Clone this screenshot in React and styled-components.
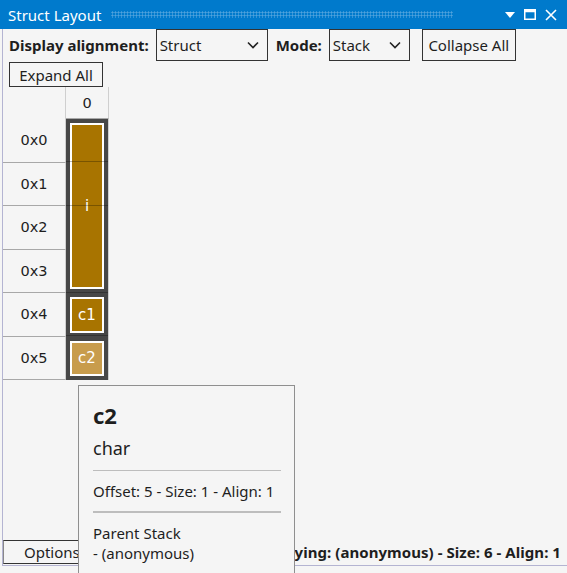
import React from 'react';
import styled, { createGlobalStyle } from 'styled-components';

const GlobalStyle = createGlobalStyle`
  html, body {
    margin: 0;
    padding: 0;
    background: #f5f5f5;
  }
  body {
    font-family: "Noto Sans", "Open Sans", sans-serif;
    color: #1e1e1e;
  }
`;

const ROW_H = 43.5;

const Window = styled.div`
  position: relative;
  height: 573px;
  display: flex;
  flex-direction: column;
  overflow: hidden;
`;

const TitleBar = styled.div`
  height: 29px;
  background: #007acc;
  display: flex;
  align-items: center;
  padding: 0 10px 0 8px;
  gap: 8px;
  color: #fff;
  font-size: 15px;
  flex-shrink: 0;
`;

const Grip = styled.div`
  flex: 1;
  height: 7px;
  margin: 0 44px 0 2px;
  background-image: radial-gradient(circle, #4fa2dc 0.9px, transparent 1.2px);
  background-size: 3px 3px;
`;

const TitleButtons = styled.div`
  display: flex;
  align-items: center;
  gap: 9px;
`;

const Body = styled.div`
  flex: 1;
  display: flex;
  flex-direction: column;
  margin-left: 2px;
  border-left: 1px solid #b4b4d2;
  border-bottom: 1px solid #b4b4d2;
  margin-bottom: 7px;
`;

const Toolbar = styled.div`
  display: flex;
  flex-wrap: wrap;
  align-items: center;
  padding: 0 0 0 6px;
  row-gap: 1px;
`;

const Label = styled.span`
  font-weight: 700;
  font-size: 15px;
  margin-right: ${p => p.$gap}px;
`;

const Select = styled.div`
  box-sizing: border-box;
  height: 32px;
  width: ${p => p.$w}px;
  border: 1px solid #333;
  display: flex;
  align-items: center;
  justify-content: space-between;
  padding: 0 8px 0 3px;
  font-size: 15px;
  margin-right: ${p => p.$gap}px;
`;

const Button = styled.div`
  box-sizing: border-box;
  height: ${p => p.$h}px;
  width: ${p => p.$w}px;
  border: 1px solid #333;
  display: flex;
  align-items: center;
  justify-content: center;
  font-size: 15px;
  background: #f5f5f5;
`;

const Grid = styled.div`
  display: grid;
  grid-template-columns: 63px 43px;
  grid-template-rows: 32px repeat(6, ${ROW_H}px);
  width: 106px;
  font-family: "DejaVu Sans", sans-serif;
  font-size: 14.5px;
`;

const HeadCell = styled.div`
  display: flex;
  align-items: center;
  justify-content: center;
  border-right: 1px solid #cfcfcf;
  border-bottom: ${p => (p.$blank ? 'none' : '1px solid #a8a8a8')};
`;

const RowCell = styled.div`
  display: flex;
  align-items: center;
  justify-content: center;
  border-right: 1px solid #cfcfcf;
  border-bottom: 1px solid #a8a8a8;
  grid-column: 1;
`;

const Block = styled.div`
  position: relative;
  grid-column: 2;
  grid-row: ${p => p.$row} / span ${p => p.$span};
  background: #474747;
  padding: 4px;
  border-right: 1px solid #cfcfcf;
  &::after {
    content: '';
    position: absolute;
    inset: 0;
    background: repeating-linear-gradient(
      to bottom,
      transparent 0,
      transparent ${ROW_H - 1}px,
      rgba(0, 0, 0, 0.28) ${ROW_H - 1}px,
      rgba(0, 0, 0, 0.28) ${ROW_H}px
    );
  }
`;

const Fill = styled.div`
  height: 100%;
  box-sizing: border-box;
  border: 2px solid #fff;
  background: ${p => p.$color};
  color: #fff;
  display: flex;
  align-items: center;
  justify-content: center;
  font-size: 15px;
`;

const Spacer = styled.div`
  flex: 1;
`;

const StatusBar = styled.div`
  display: flex;
  align-items: center;
  justify-content: space-between;
  padding: 0 6px 1px 0;
  height: 25px;
`;

const OptionsButton = styled.div`
  box-sizing: border-box;
  height: 24px;
  width: 120px;
  border: 1px solid #333;
  border-left-color: #888;
  font-size: 15px;
  padding-left: 20px;
  display: flex;
  align-items: center;
`;

const Status = styled.div`
  font-weight: 700;
  font-size: 15px;
  letter-spacing: 0.05px;
`;

const Tooltip = styled.div`
  position: absolute;
  left: 78px;
  top: 385px;
  width: 217px;
  height: 200px;
  box-sizing: border-box;
  background: #f5f5f5;
  border: 1px solid #8f8f8f;
  padding: 14px 13px 0 14px;
`;

const TipTitle = styled.div`
  font-weight: 700;
  font-size: 22px;
  line-height: 31px;
`;

const TipType = styled.div`
  font-size: 18px;
  line-height: 28px;
  margin-top: 3px;
`;

const TipRule = styled.div`
  height: ${p => p.$h}px;
  background: #bdbdbd;
  margin: ${p => p.$m};
`;

const TipText = styled.div`
  font-size: 15px;
  line-height: 20px;
`;

const Chevron = () => (
  <svg width="12" height="8" viewBox="0 0 12 8">
    <path d="M1 1.5 L6 6.5 L11 1.5" fill="none" stroke="#222" strokeWidth="1.6" />
  </svg>
);

const rows = ['0x0', '0x1', '0x2', '0x3', '0x4', '0x5'];

export default function App() {
  return (
    <>
      <GlobalStyle />
      <Window>
        <TitleBar>
          <span>Struct Layout</span>
          <Grip />
          <TitleButtons>
            <svg width="10" height="6" viewBox="0 0 10 6">
              <path d="M0 0 H10 L5 6 Z" fill="#fff" />
            </svg>
            <svg width="12" height="11" viewBox="0 0 12 11">
              <rect x="0.75" y="0.75" width="10.5" height="9.5" fill="none" stroke="#fff" strokeWidth="1.5" />
              <rect x="0.75" y="0.75" width="10.5" height="2.5" fill="#fff" />
            </svg>
            <svg width="12" height="12" viewBox="0 0 12 12">
              <path d="M1 1 L11 11 M11 1 L1 11" stroke="#fff" strokeWidth="1.6" />
            </svg>
          </TitleButtons>
        </TitleBar>
        <Body>
          <Toolbar>
            <Label $gap={7}>Display alignment:</Label>
            <Select $w={112} $gap={8}>
              <span>Struct</span>
              <Chevron />
            </Select>
            <Label $gap={7}>Mode:</Label>
            <Select $w={81} $gap={12}>
              <span>Stack</span>
              <Chevron />
            </Select>
            <Button $w={94} $h={32}>Collapse All</Button>
            <Button $w={94} $h={25}>Expand All</Button>
          </Toolbar>
          <Grid>
            <HeadCell $blank />
            <HeadCell>0</HeadCell>
            {rows.map(r => (
              <RowCell key={r}>{r}</RowCell>
            ))}
            <Block $row={2} $span={4}>
              <Fill $color="#a87400">i</Fill>
            </Block>
            <Block $row={6} $span={1}>
              <Fill $color="#a87400">c1</Fill>
            </Block>
            <Block $row={7} $span={1}>
              <Fill $color="#c89c4c">c2</Fill>
            </Block>
          </Grid>
          <Spacer />
          <StatusBar>
            <OptionsButton>Options</OptionsButton>
            <Status>Displaying: (anonymous) - Size: 6 - Align: 1</Status>
          </StatusBar>
        </Body>
        <Tooltip>
          <TipTitle>c2</TipTitle>
          <TipType>char</TipType>
          <TipRule $h={1} $m="8px 0 10px" />
          <TipText>Offset: 5 - Size: 1 - Align: 1</TipText>
          <TipRule $h={2} $m="10px 0 10px" />
          <TipText>Parent Stack</TipText>
          <TipText>- (anonymous)</TipText>
        </Tooltip>
      </Window>
    </>
  );
}
